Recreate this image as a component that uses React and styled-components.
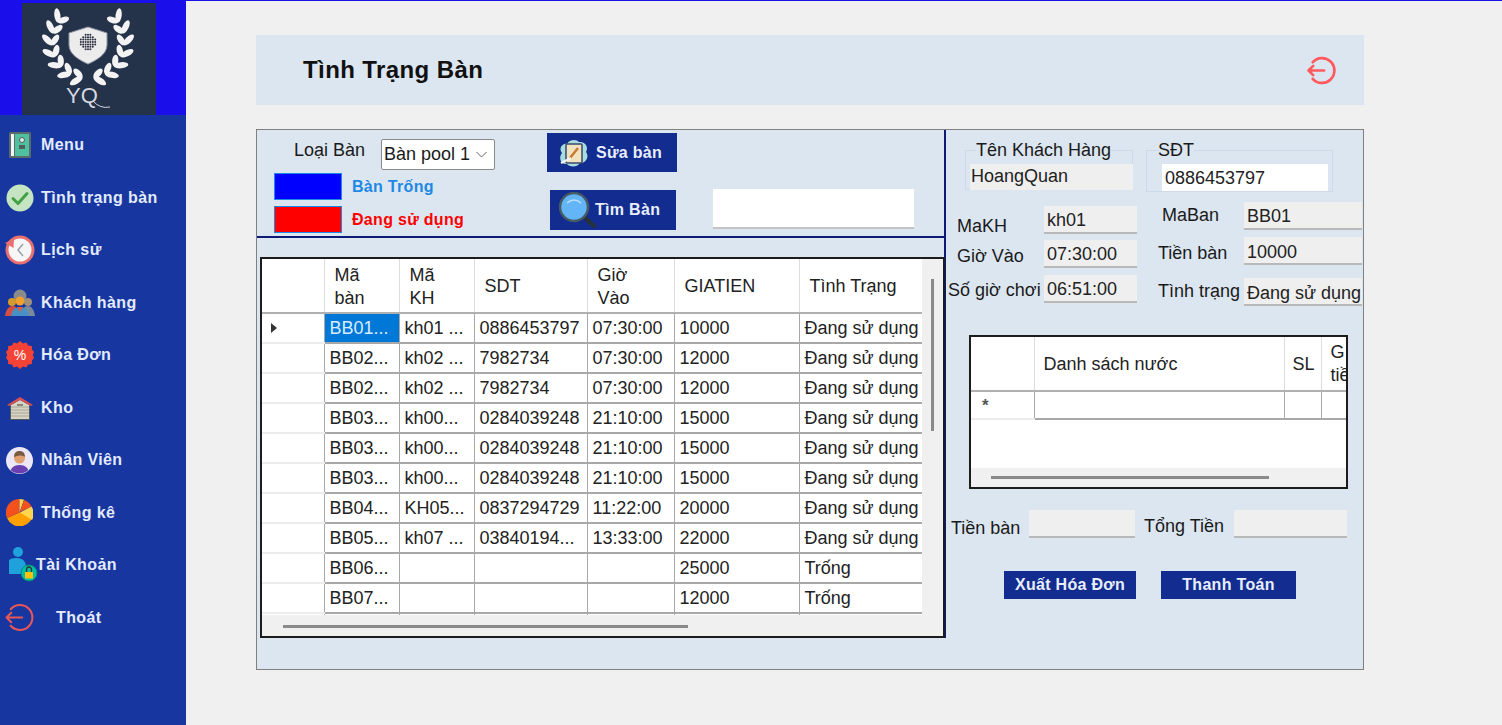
import React from "react";
import styled, { createGlobalStyle } from "styled-components";

const Global = createGlobalStyle`
  html, body { margin: 0; padding: 0; height: 100%; overflow: hidden; background: #f0f0f0; }
  body { font-family: "Liberation Sans", Arial, sans-serif; color: #1a1a1a; }
  * { box-sizing: border-box; }
`;

const Page = styled.div`
  width: 1502px; height: 725px; display: flex; border-top: 1px solid #1a10e8; background: #f0f0f0;
`;
const Sidebar = styled.aside`
  width: 186px; flex: none; background: #1736a0; display: flex; flex-direction: column;
`;
const LogoBand = styled.div`
  height: 114px; background: #1a0eea; padding: 2px 30px 0 22px;
`;
const LogoBox = styled.div`
  width: 134px; height: 112px; background: #24324a;
`;
const Nav = styled.nav`
  display: flex; flex-direction: column; padding-top: 4px;
`;
const NavRow = styled.div`
  height: 52.5px; display: flex; align-items: center; padding-left: 3px;
`;
const IconSlot = styled.span`
  width: 33px; height: 34px; flex: none; display: flex; align-items: center; justify-content: center;
`;
const NavLabel = styled.span`
  margin-left: ${p => p.$indent}px; font-size: 16px; font-weight: 700; letter-spacing: 0.4px; color: #e3ebff;
  white-space: nowrap;
`;
const Main = styled.main`
  flex: 1; padding: 34px 138px 0 70px; display: flex; flex-direction: column; gap: 24px;
`;
const Header = styled.header`
  height: 70px; background: #dce6f0; display: flex; align-items: center; justify-content: space-between;
  padding: 0 28px 0 47px;
`;
const Title = styled.h1`
  margin: 0; font-size: 24px; font-weight: 700; color: #111; letter-spacing: 0.4px;
`;
const Panel = styled.section`
  height: 541px; background: #dce6f0; border: 1px solid #808080; display: flex; align-items: flex-start;
`;
const LeftPane = styled.div`
  width: 689px; height: 508px; flex: none; border-right: 2px solid #0e1a78; display: flex; flex-direction: column;
`;
const TopBar = styled.div`
  height: 108px; flex: none; border-bottom: 2px solid #0e1a78; display: flex; padding: 3px 0 0 17px;
`;
const LegendCol = styled.div`
  width: 273px; flex: none; display: flex; flex-direction: column;
`;
const TypeRow = styled.div`
  display: flex; align-items: flex-start; padding-left: 20px; height: 40px;
`;
const TypeLabel = styled.span`
  font-size: 18px; line-height: 22px; width: 87px; flex: none; margin-top: 6px;
`;
const Select = styled.div`
  width: 114px; height: 31px; margin-top: 6px; background: #fff; border: 1px solid #8a8a8a; border-radius: 2px;
  display: flex; align-items: center; justify-content: space-between; padding: 0 7px 0 2px; font-size: 18px;
`;
const LegendRow = styled.div`
  display: flex; align-items: center; height: 27px; margin-bottom: ${p => p.$mb}px;
`;
const Swatch = styled.span`
  width: 68px; height: 100%; flex: none; background: ${p => p.$c}; border: 1px solid #1e88e5;
`;
const LegendText = styled.span`
  margin-left: 10px; font-size: 16px; font-weight: 700; letter-spacing: .3px; color: ${p => p.$c};
`;
const ActionCol = styled.div`
  display: flex; flex-direction: column; gap: 18px; width: 166px; flex: none; align-items: flex-start;
`;
const Btn = styled.button`
  width: ${p => p.$w}px; height: ${p => p.$h}px; margin-left: ${p => p.$ml || 0}px; border: 0; padding: 0 0 0 ${p => p.$pl || 0}px;
  background: #122c8f; color: #e8eefc; font: 700 16px "Liberation Sans", Arial, sans-serif; letter-spacing: .3px;
  display: flex; align-items: center; justify-content: ${p => p.$center ? "center" : "flex-start"}; gap: ${p => p.$gap || 0}px;
`;
const BtnIcon = styled.svg`
  flex: none; margin-right: ${p => p.$mr}px;
`;
const SearchBox = styled.div`
  width: 201px; height: 40px; margin-top: 56px; background: #fff; border-bottom: 2px solid #c4c4c4;
`;
const Grid = styled.div`
  flex: none; background: #fff; border: 2px solid #1c1c1c; display: flex; flex-direction: column; overflow: hidden;
  width: ${p => p.$w}px; height: ${p => p.$h}px; margin: ${p => p.$m};
`;
const GridBody = styled.div`
  flex: 1; min-height: 0; display: flex; overflow: hidden;
`;
const TableClip = styled.div`
  flex: 1; min-width: 0; overflow: hidden;
`;
const Table = styled.table`
  border-collapse: collapse; table-layout: fixed; width: ${p => p.$w}px; font-size: 18px;
`;
const Th = styled.th`
  height: ${p => p.$h}px; font-weight: 400; text-align: left; padding: ${p => p.$pt || 0}px 0 0 ${p => p.$pl ?? 10}px; line-height: 23px;
  border-right: 1px solid #dcdcdc; border-bottom: 2px solid #b0b0b0; overflow: hidden; color: #222;
`;
const Td = styled.td`
  height: ${p => p.$h || 30}px; padding: 0 0 0 5px; white-space: nowrap; overflow: hidden; color: #222;
  border-right: 1px solid #a8a8a8; border-bottom: 2px solid #a8a8a8;
  background: ${p => p.$sel ? "#0078d7" : "#fff"}; ${p => p.$sel && "color: #d8ecff;"}
`;
const RowHead = styled.td`
  height: ${p => p.$h || 30}px; padding: 0 0 0 ${p => p.$pl || 9}px; border-right: 1px solid #a8a8a8; border-bottom: 2px solid #ececec;
`;
const Caret = styled.span`
  display: block; width: 0; height: 0; border-left: 6px solid #333; border-top: 5px solid transparent; border-bottom: 5px solid transparent;
`;
const NewRowMark = styled.span`
  font-size: 17px; font-weight: 700; color: #555; line-height: 1;
`;
const VTrack = styled.div`
  width: 21px; flex: none; background: #f0f0f0; padding: 20px 0 0 9px;
`;
const VThumb = styled.div`
  width: 3px; height: 152px; background: #8a8a8a;
`;
const HTrack = styled.div`
  height: ${p => p.$h}px; flex: none; background: #f0f0f0; padding: ${p => p.$pad};
`;
const HThumb = styled.div`
  width: ${p => p.$w}px; height: 3px; background: #8a8a8a;
`;
const RightPane = styled.div`
  flex: 1; min-width: 0; padding: 10px 0 0 2px; display: flex; flex-direction: column;
`;
const Groups = styled.div`
  display: flex; height: 55px;
`;
const Group = styled.fieldset`
  margin: 0 0 0 ${p => p.$ml}px; padding: 0 0 0 ${p => p.$pl}px; width: ${p => p.$w}px; height: ${p => p.$h}px;
  border: 1px solid #cfdae6; min-inline-size: 0;
`;
const GroupTitle = styled.legend`
  font-size: 18px; line-height: 21px; padding: 0; margin-left: ${p => p.$ml}px;
`;
const Value = styled.div`
  width: ${p => p.$w}px; height: ${p => p.$h || 28}px; flex: none; background: ${p => p.$white ? "#fff" : "#efefef"};
  border-bottom: ${p => p.$flat ? "0" : "2px solid #b9b9b9"}; font-size: 18px; line-height: ${p => p.$lh || 28}px;
  padding-left: ${p => p.$pl ?? 3}px; white-space: nowrap; overflow: hidden; color: #222;
  margin-top: ${p => p.$mt || 0}px;
`;
const FieldCols = styled.div`
  display: flex; margin-top: 5px; height: 135px;
`;
const FieldCol = styled.div`
  width: ${p => p.$w}px; flex: none; padding-top: ${p => p.$pt}px; display: flex; flex-direction: column;
`;
const FieldRow = styled.div`
  display: flex; align-items: flex-start; height: 28px; flex: none; margin-bottom: ${p => p.$mb || 0}px;
`;
const FieldLabel = styled.span`
  width: ${p => p.$w}px; flex: none; padding-left: ${p => p.$pl || 0}px; margin-top: ${p => p.$dy}px; font-size: 18px; line-height: 22px; white-space: nowrap;
`;
const Totals = styled.div`
  display: flex; align-items: flex-start; margin-top: 21px; padding-left: 3px;
`;
const TotalLabel = styled.span`
  flex: none; width: ${p => p.$w}px; padding-left: ${p => p.$pl || 0}px; margin-top: ${p => p.$dy}px; font-size: 18px; line-height: 22px;
`;
const Actions = styled.div`
  display: flex; gap: 25px; margin-top: 32px; padding-left: 56px;
`;

const Exit = ({ size, color, w = 2.6 }) => (
  <svg width={size} height={size} viewBox="0 0 28 28" fill="none" stroke={color} strokeWidth={w} strokeLinecap="round" strokeLinejoin="round">
    <path d="M5.500 6A12 12 0 1 1 5.500 22" />
    <path d="M1.500 14H16.500M6 9.500L1.500 14L6 18.500" />
  </svg>
);

const Wreath = () => {
  const c = { x: 66, y: 39 }, r = 36, leaves = [];
  const add = (key, x, y, deg, rx) => {
    leaves.push(<ellipse key={`l${key}`} cx={x} cy={y} rx={rx} ry="3.100" transform={`rotate(${deg} ${x} ${y})`} fill="#f3f3f3" />);
    leaves.push(<ellipse key={`r${key}`} cx={2 * c.x - x} cy={y} rx={rx} ry="3.100" transform={`rotate(${180 - deg} ${2 * c.x - x} ${y})`} fill="#f3f3f3" />);
  };
  for (let i = 0; i < 7; i++) {
    const th = (100 + i * 19) * Math.PI / 180;
    const px = c.x + r * Math.cos(th), py = c.y + r * Math.sin(th);
    const tx = -Math.sin(th), ty = Math.cos(th), nx = Math.cos(th), ny = Math.sin(th);
    const ox = tx * 0.75 + nx * 0.65, oy = ty * 0.75 + ny * 0.65;
    const ix = tx * 0.8 - nx * 0.6, iy = ty * 0.8 - ny * 0.6;
    add(`o${i}`, px + ox * 6.5, py + oy * 6.5, Math.atan2(oy, ox) * 180 / Math.PI, 7.2);
    add(`i${i}`, px + ix * 5.5, py + iy * 5.5, Math.atan2(iy, ix) * 180 / Math.PI, 6);
  }
  const dots = [];
  for (let a = -3; a <= 3; a++) for (let b = -3; b <= 3; b++) {
    if (a * a + b * b <= 10) dots.push(<circle key={`${a}${b}`} cx={66 + a * 2.400} cy={39 + b * 2.400} r="1" fill="#2b3040" />);
  }
  return (
    <svg width="134" height="112" viewBox="0 0 134 112" style={{ display: "block" }}>
      {leaves}
      <path d="M66 24L85 30V42C85 51 75 57 66 61C57 57 47 51 47 42V30Z" fill="#ececec" stroke="#8f96a3" strokeWidth="1" />
      {dots}
      <text x="60" y="100" textAnchor="middle" fill="#d5d8df" fontFamily="Liberation Sans, sans-serif" fontSize="22">YQ</text>
      <path d="M71 98Q78 106 88 104" stroke="#d5d8df" fill="none" strokeWidth="1" />
    </svg>
  );
};

const icons = {
  menu: (
    <svg width="24" height="28" viewBox="0 0 24 28"><rect x="1" y="1" width="22" height="26" rx="1.500" fill="#5b6b68" /><rect x="7" y="3" width="14" height="22" fill="#4fc0a0" /><rect x="3" y="3" width="3" height="22" fill="#f4f4f4" /><circle cx="14" cy="9" r="2.500" fill="#dfe8e6" stroke="#4e5f5c" /><rect x="11" y="14" width="6" height="4" fill="#4e5f5c" /></svg>
  ),
  check: (
    <svg width="28" height="28" viewBox="0 0 28 28"><circle cx="14" cy="14" r="13.500" fill="#c5e5c2" /><path d="M7 14.500L12 19.500L21 9.500" fill="none" stroke="#43a047" strokeWidth="3" strokeLinecap="round" strokeLinejoin="round" /></svg>
  ),
  clock: (
    <svg width="30" height="30" viewBox="0 0 30 30"><circle cx="15" cy="15" r="13" fill="#f6f6f6" stroke="#e87070" strokeWidth="3" /><path d="M0 8L9 3.500L8.500 13Z" fill="#e87070" /><path d="M18 9L13 15L18 21" fill="none" stroke="#9aa0a6" strokeWidth="1.500" /></svg>
  ),
  users: (
    <svg width="30" height="28" viewBox="0 0 30 28"><circle cx="15" cy="7" r="6.500" fill="#8a8a8a" /><circle cx="7" cy="13" r="4" fill="#d49b2a" /><circle cx="23" cy="13" r="4" fill="#a0907a" /><path d="M0 27C1 19 5 17 8 17C11 17 13 20 13 27Z" fill="#d35040" /><path d="M17 27C17 20 19 17 23 17C26 17 29 20 30 27Z" fill="#7a8a9a" /><circle cx="15" cy="12" r="4.500" fill="#f0a030" /><path d="M6 27C7 20 11 18 15 18C19 18 23 20 24 27Z" fill="#4a90c8" /><path d="M12 18L15 23L18 18Z" fill="#e85a30" /></svg>
  ),
  percent: (
    <svg width="28" height="28" viewBox="0 0 28 28"><path d="M14 0L17 2.500L20.500 1.500L22 4.500L25.800 5L26 8.500L28 11L26.800 14L28 17L26 19.500L25.800 23L22 23.500L20.500 26.500L17 25.500L14 28L11 25.500L7.500 26.500L6 23.500L2.200 23L2 19.500L0 17L1.200 14L0 11L2 8.500L2.200 5L6 4.500L7.500 1.500L11 2.500Z" fill="#f44336" /><text x="14" y="19" textAnchor="middle" fontFamily="Liberation Sans, sans-serif" fontSize="14" fill="#fff">%</text></svg>
  ),
  garage: (
    <svg width="26" height="24" viewBox="0 0 26 24"><rect x="3" y="8" width="20" height="16" fill="#4d5a60" /><path d="M4 9L13 4L22 9V23H4Z" fill="#d8d4c4" /><path d="M4 11H22M4 14H22M4 17H22M4 20H22" stroke="#a8a498" /><path d="M0 9L13 1L26 9L24 10L13 4L2 10Z" fill="#d85050" /><rect x="10" y="8" width="6" height="2" fill="#8a8678" /></svg>
  ),
  person: (
    <svg width="27" height="27" viewBox="0 0 27 27"><clipPath id="pc"><circle cx="13.500" cy="13.500" r="13" /></clipPath><circle cx="13.500" cy="13.500" r="13.500" fill="#ece7f7" /><g clipPath="url(#pc)"><path d="M4 27C4 21 8 18 13.500 18C19 18 23 21 23 27Z" fill="#6a3fb0" /><circle cx="13.500" cy="11" r="5.500" fill="#e0a070" /><path d="M8 10C8 5 11 4 13.500 4C17 4 19 6 19 10C16 8 12 8 8 10Z" fill="#7a5a40" /></g></svg>
  ),
  pie: (
    <svg width="27" height="27" viewBox="0 0 27 27"><path d="M13.500 13.500L27 13.500A13.500 13.500 0 0 1 1 19Z" fill="#ffa000" /><path d="M13.500 13.500L1 19A13.500 13.500 0 0 1 13.500 0Z" fill="#f4511e" /><path d="M13.500 13.500V0A13.500 13.500 0 0 1 18 .8Z" fill="#ffd54f" /><path d="M14 13L18 1A13.500 13.500 0 0 1 25.500 7.500Z" fill="#f4511e" /><path d="M14 13.500L25.500 7.500A13.500 13.500 0 0 1 26 21Z" fill="#ffd54f" /></svg>
  ),
  account: (
    <svg width="30" height="36" viewBox="0 0 30 36" style={{ overflow: "visible" }}><g transform="translate(3 0)"><circle cx="10" cy="5" r="5" fill="#1fa2dc" /><path d="M1 14C1 12 4 11 9 11C15 11 18 15 18 20V27H1Z" fill="#1fa2dc" /><circle cx="21" cy="26" r="8" fill="#00bfa5" stroke="#00897b" /><rect x="17" y="25" width="8" height="6.500" fill="#ffc107" /><path d="M18.500 25V22.500A2.500 2.500 0 0 1 23.500 22.500V25" fill="none" stroke="#333" strokeWidth="1.300" /></g></svg>
  ),
};

const navItems = [
  ["menu", "Menu", 5], ["check", "Tình trạng bàn", 5], ["clock", "Lịch sử", 5], ["users", "Khách hàng", 5],
  ["percent", "Hóa Đơn", 5], ["garage", "Kho", 5], ["person", "Nhân Viên", 5], ["pie", "Thống kê", 5],
  ["account", "Tài Khoản", 0], ["exit", "Thoát", 20],
];

const cols = [62, 75, 75, 113, 87, 125, 124];
const rows = [
  ["BB01...", "kh01 ...", "0886453797", "07:30:00", "10000", "Đang sử dụng"],
  ["BB02...", "kh02 ...", "7982734", "07:30:00", "12000", "Đang sử dụng"],
  ["BB02...", "kh02 ...", "7982734", "07:30:00", "12000", "Đang sử dụng"],
  ["BB03...", "kh00...", "0284039248", "21:10:00", "15000", "Đang sử dụng"],
  ["BB03...", "kh00...", "0284039248", "21:10:00", "15000", "Đang sử dụng"],
  ["BB03...", "kh00...", "0284039248", "21:10:00", "15000", "Đang sử dụng"],
  ["BB04...", "KH05...", "0837294729", "11:22:00", "20000", "Đang sử dụng"],
  ["BB05...", "kh07 ...", "03840194...", "13:33:00", "22000", "Đang sử dụng"],
  ["BB06...", "", "", "", "25000", "Trống"],
  ["BB07...", "", "", "", "12000", "Trống"],
  ["", "", "", "", "", ""],
];
const dcols = [63, 250, 37, 40];

export default function App() {
  return (
    <Page>
      <Global />
      <Sidebar>
        <LogoBand><LogoBox><Wreath /></LogoBox></LogoBand>
        <Nav>
          {navItems.map(([k, t, ind]) => (
            <NavRow key={t}>
              <IconSlot>{k === "exit" ? <Exit size={29} color="#e85757" w={2} /> : icons[k]}</IconSlot>
              <NavLabel $indent={ind}>{t}</NavLabel>
            </NavRow>
          ))}
        </Nav>
      </Sidebar>
      <Main>
        <Header>
          <Title>Tình Trạng Bàn</Title>
          <Exit size={29} color="#ff5a5f" />
        </Header>
        <Panel>
          <LeftPane>
            <TopBar>
              <LegendCol>
                <TypeRow>
                  <TypeLabel>Loại Bàn</TypeLabel>
                  <Select>
                    Bàn pool 1
                    <svg width="11" height="7" viewBox="0 0 11 7" fill="none" stroke="#666"><path d="M.5 1L5.500 6L10.500 1" /></svg>
                  </Select>
                </TypeRow>
                <LegendRow $mb={6}><Swatch $c="#0000ff" /><LegendText $c="#1e88e5">Bàn Trống</LegendText></LegendRow>
                <LegendRow><Swatch $c="#ff0000" /><LegendText $c="#ff0000">Đang sử dụng</LegendText></LegendRow>
              </LegendCol>
              <ActionCol>
                <Btn $w={130} $h={39} $pl={10}>
                  <BtnIcon $mr={6} width="33" height="30" viewBox="0 0 33 30"><path d="M5 15C1 10 6 5 10 6C12 1 20 1 22 4C28 3 32 9 29 14C33 19 28 26 23 25C20 30 12 29 10 26C4 27 1 20 5 15Z" fill="#a8dde0" /><rect x="9" y="6" width="16" height="19" rx="1" fill="#f2e3c0" stroke="#3d4a6b" strokeWidth="1.500" /><path d="M13 20L21 10" stroke="#c77b30" strokeWidth="2.500" /><path d="M4 25L14 20" stroke="#f4f4f4" strokeWidth="2" /></BtnIcon>
                  Sửa bàn
                </Btn>
                <Btn $w={126} $h={40} $ml={3} $pl={9}>
                  <BtnIcon $mr={-2} width="38" height="37" viewBox="0 0 38 37"><path d="M25 25L35 34" stroke="#263238" strokeWidth="4" strokeLinecap="round" /><circle cx="15" cy="15" r="14" fill="#64b5f6" stroke="#455a64" strokeWidth="2.500" /><path d="M8 11Q15 5 22 11" fill="none" stroke="#bbdefb" strokeWidth="1.500" /></BtnIcon>
                  Tìm Bàn
                </Btn>
              </ActionCol>
              <SearchBox />
            </TopBar>
            <Grid $w={685} $h={381} $m="19px 0 0 3px">
              <GridBody>
                <TableClip>
                  <Table $w={661}>
                    <colgroup>{cols.map((w, i) => <col key={i} style={{ width: w }} />)}</colgroup>
                    <thead>
                      <tr>
                        <Th $h={54} $pt={2} />
                        <Th $pt={2}>Mã<br />bàn</Th><Th $pt={2}>Mã<br />KH</Th><Th $pt={2}>SDT</Th><Th $pt={2}>Giờ<br />Vào</Th><Th $pt={2}>GIATIEN</Th><Th $pt={2}>Tình Trạng</Th>
                      </tr>
                    </thead>
                    <tbody>
                      {rows.map((r, i) => (
                        <tr key={i}>
                          <RowHead>{i === 0 && <Caret />}</RowHead>
                          {r.map((c, j) => <Td key={j} $sel={i === 0 && j === 0}>{c}</Td>)}
                        </tr>
                      ))}
                    </tbody>
                  </Table>
                </TableClip>
                <VTrack><VThumb /></VTrack>
              </GridBody>
              <HTrack $h={21} $pad="10px 0 0 21px"><HThumb $w={405} /></HTrack>
            </Grid>
          </LeftPane>
          <RightPane>
            <Groups>
              <Group $ml={17} $w={168} $h={50} $pl={4}>
                <GroupTitle $ml={6}>Tên Khách Hàng</GroupTitle>
                <Value $w={163} $h={26} $flat $pl={1} $mt={3} $lh={24}>HoangQuan</Value>
              </Group>
              <Group $ml={13} $w={187} $h={52} $pl={15}>
                <GroupTitle $ml={-4}>SĐT</GroupTitle>
                <Value $w={166} $h={27} $white $flat $pl={3} $mt={3}>0886453797</Value>
              </Group>
            </Groups>
            <FieldCols>
              <FieldCol $w={210} $pt={6}>
                <FieldRow $mb={6}><FieldLabel $w={96} $pl={9} $dy={9}>MaKH</FieldLabel><Value $w={93}>kh01</Value></FieldRow>
                <FieldRow $mb={7}><FieldLabel $w={96} $pl={9} $dy={5}>Giờ Vào</FieldLabel><Value $w={93}>07:30:00</Value></FieldRow>
                <FieldRow><FieldLabel $w={96} $dy={4}>Số giờ chơi</FieldLabel><Value $w={93}>06:51:00</Value></FieldRow>
              </FieldCol>
              <FieldCol $w={205} $pt={2}>
                <FieldRow $mb={7}><FieldLabel $w={86} $pl={4} $dy={2}>MaBan</FieldLabel><Value $w={118} $lh={28}>BB01</Value></FieldRow>
                <FieldRow $mb={13}><FieldLabel $w={86} $dy={5}>Tiền bàn</FieldLabel><Value $w={118} $lh={30}>10000</Value></FieldRow>
                <FieldRow><FieldLabel $w={86} $dy={2}>Tình trạng</FieldLabel><Value $w={118} $lh={30}>Đang sử dụng</Value></FieldRow>
              </FieldCol>
            </FieldCols>
            <Grid $w={379} $h={154} $m="0 0 0 21px">
              <GridBody>
                <TableClip>
                  <Table $w={390}>
                    <colgroup>{dcols.map((w, i) => <col key={i} style={{ width: w }} />)}</colgroup>
                    <thead>
                      <tr>
                        <Th $h={54} $pl={9} />
                        <Th $pl={9} $pt={2}>Danh sách nước</Th><Th $pl={8} $pt={2}>SL</Th><Th $pl={9}>G<br />tiề</Th>
                      </tr>
                    </thead>
                    <tbody>
                      <tr>
                        <RowHead $h={28} $pl={11}><NewRowMark>*</NewRowMark></RowHead>
                        <Td $h={28} /><Td $h={28} /><Td $h={28} />
                      </tr>
                    </tbody>
                  </Table>
                </TableClip>
              </GridBody>
              <HTrack $h={19} $pad="8px 0 0 20px"><HThumb $w={278} /></HTrack>
            </Grid>
            <Totals>
              <TotalLabel $w={78} $dy={7}>Tiền bàn</TotalLabel>
              <Value $w={106} />
              <TotalLabel $w={99} $pl={9} $dy={5}>Tổng Tiền</TotalLabel>
              <Value $w={113} />
            </Totals>
            <Actions>
              <Btn $w={132} $h={28} $center>Xuất Hóa Đơn</Btn>
              <Btn $w={135} $h={28} $center>Thanh Toán</Btn>
            </Actions>
          </RightPane>
        </Panel>
      </Main>
    </Page>
  );
}
